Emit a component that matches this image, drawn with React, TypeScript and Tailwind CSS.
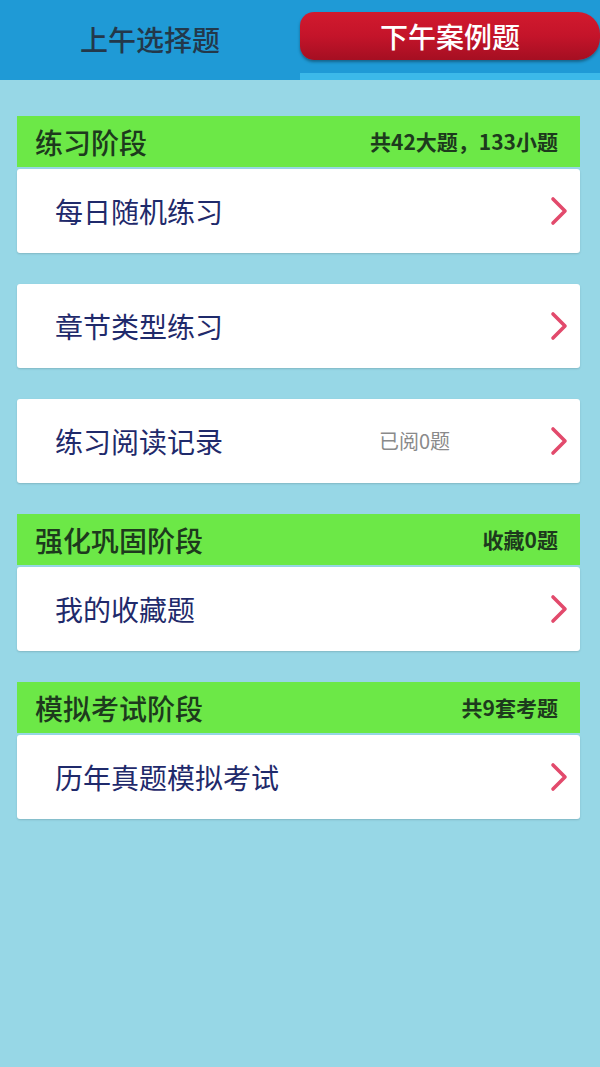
import React from "react";

const FONT = { fontFamily: '"Noto Sans CJK SC", "Noto Sans", sans-serif' };

type Item = { label: string; note?: string };
type Section = { title: string; summary: string; items: Item[] };

const sections: Section[] = [
  {
    title: "练习阶段",
    summary: "共42大题，133小题",
    items: [
      { label: "每日随机练习" },
      { label: "章节类型练习" },
      { label: "练习阅读记录", note: "已阅0题" },
    ],
  },
  {
    title: "强化巩固阶段",
    summary: "收藏0题",
    items: [{ label: "我的收藏题" }],
  },
  {
    title: "模拟考试阶段",
    summary: "共9套考题",
    items: [{ label: "历年真题模拟考试" }],
  },
];

const Chevron = () => (
  <svg width="18" height="30" viewBox="0 0 18 30" fill="none">
    <path
      d="M3 3 L15 15 L3 27"
      stroke="#e24a6c"
      strokeWidth="3.6"
      strokeLinecap="round"
      strokeLinejoin="round"
    />
  </svg>
);

const ItemCard = ({ item }: { item: Item }) => (
  <div className="h-[84px] bg-white rounded-[3px] shadow-[0_1px_2px_rgba(0,0,0,0.15)] flex items-center pl-[38px] pr-[12px]">
    <span className="text-[28px] text-[#1f2a6b] flex-1">{item.label}</span>
    {item.note && (
      <span className="text-[20px] text-[#8a8a8a] mr-[100px]">{item.note}</span>
    )}
    <Chevron />
  </div>
);

export default function App() {
  return (
    <div className="w-[600px] h-[1067px] bg-[#97d7e6]" style={FONT}>
      {/* Tabs */}
      <div className="h-[80px] bg-[#1f9ad6] flex">
        <div className="w-[300px] flex items-center justify-center pb-[2px]">
          <span className="text-[28px] text-[#23384a] font-medium">
            上午选择题
          </span>
        </div>
        <div className="w-[300px] flex flex-col">
          <div className="flex-1 flex items-center pt-[4px] pb-[6px]">
            <div className="w-full h-[48px] rounded-l-[14px] rounded-r-[22px] bg-gradient-to-b from-[#d21a2e] via-[#c4142a] to-[#a50f22] shadow-[0_2px_3px_rgba(0,0,0,0.35)] flex items-center justify-center">
              <span className="text-[28px] text-white font-medium">
                下午案例题
              </span>
            </div>
          </div>
          <div className="h-[7px] bg-[#3cb9e9]" />
        </div>
      </div>

      {/* Sections */}
      <div className="px-[17px] pt-[36px] pr-[20px] flex flex-col gap-[31px]">
        {sections.map((s) => (
          <div key={s.title} className="flex flex-col gap-[2px]">
            <div className="h-[51px] bg-[#6ce847] flex items-center justify-between pl-[18px] pr-[22px]">
              <span className="text-[28px] font-medium text-[#1d3a1d]">
                {s.title}
              </span>
              <span className="text-[21px] font-bold text-[#1d3a1d]">
                {s.summary}
              </span>
            </div>
            <div className="flex flex-col gap-[31px]">
              {s.items.map((it) => (
                <ItemCard key={it.label} item={it} />
              ))}
            </div>
          </div>
        ))}
      </div>
    </div>
  );
}
